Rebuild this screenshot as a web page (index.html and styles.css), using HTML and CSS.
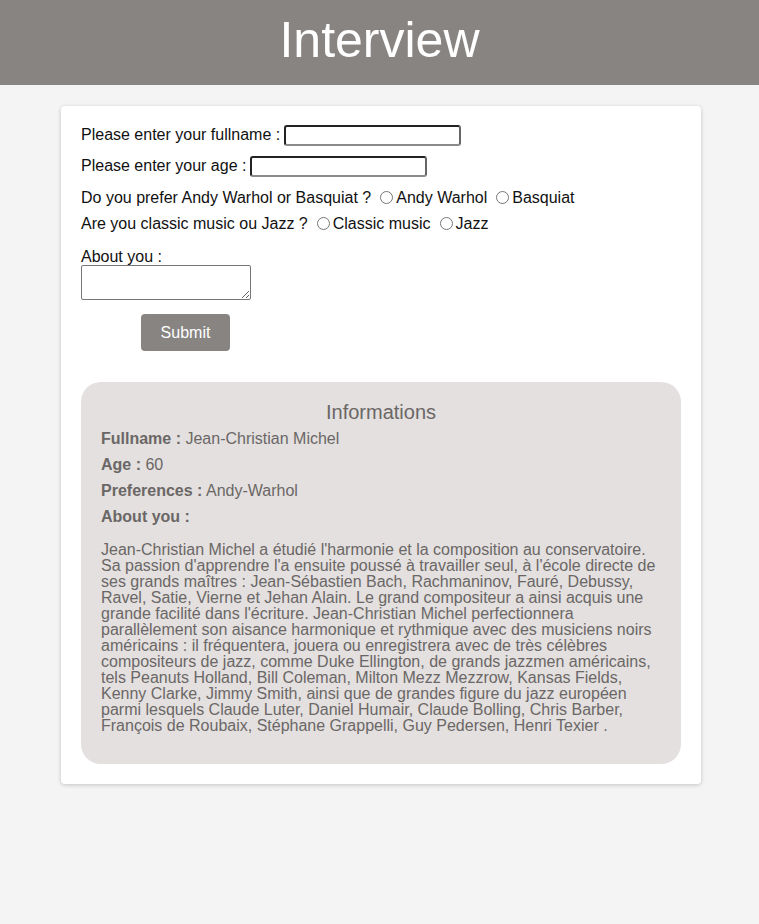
FILE: index.html
```html
<!DOCTYPE html>
<html lang="fr">
<head>
<meta charset="utf-8">
<title>Interview</title>
<link rel="stylesheet" href="styles.css">
</head>
<body>
<header class="top">
  <h1 class="title">Interview</h1>
</header>
<main class="card">
  <form class="form">
    <div class="row row-input">
      <label for="fullname">Please enter your fullname :</label>
      <input class="field" id="fullname" type="text">
    </div>
    <div class="row row-input">
      <label for="age">Please enter your age :</label>
      <input class="field" id="age" type="text">
    </div>
    <div class="row row-radio">
      <span>Do you prefer Andy Warhol or Basquiat ?</span>
      <input class="radio" type="radio" name="pref" id="r1"><label for="r1">Andy Warhol</label>
      <input class="radio" type="radio" name="pref" id="r2"><label for="r2">Basquiat</label>
    </div>
    <div class="row row-radio row-radio2">
      <span>Are you classic music ou Jazz ?</span>
      <input class="radio" type="radio" name="music" id="m1"><label for="m1">Classic music</label>
      <input class="radio" type="radio" name="music" id="m2"><label for="m2">Jazz</label>
    </div>
    <div class="about">
      <label for="about" class="about-label">About you :</label>
      <textarea id="about" class="area"></textarea>
    </div>
    <button type="button" class="submit">Submit</button>
  </form>
  <section class="info">
    <h2 class="info-title">Informations</h2>
    <div class="info-row"><b>Fullname :</b> Jean-Christian Michel</div>
    <div class="info-row"><b>Age :</b> 60</div>
    <div class="info-row"><b>Preferences :</b> Andy-Warhol</div>
    <div class="info-row"><b>About you :</b></div>
    <p class="bio">Jean-Christian Michel a étudié l'harmonie et la composition au conservatoire. Sa passion d'apprendre l'a ensuite poussé à travailler seul, à l'école directe de ses grands maîtres : Jean-Sébastien Bach, Rachmaninov, Fauré, Debussy, Ravel, Satie, Vierne et Jehan Alain. Le grand compositeur a ainsi acquis une grande facilité dans l'écriture. Jean-Christian Michel perfectionnera parallèlement son aisance harmonique et rythmique avec des musiciens noirs américains : il fréquentera, jouera ou enregistrera avec de très célèbres compositeurs de jazz, comme Duke Ellington, de grands jazzmen américains, tels Peanuts Holland, Bill Coleman, Milton Mezz Mezzrow, Kansas Fields, Kenny Clarke, Jimmy Smith, ainsi que de grandes figure du jazz européen parmi lesquels Claude Luter, Daniel Humair, Claude Bolling, Chris Barber, François de Roubaix, Stéphane Grappelli, Guy Pedersen, Henri Texier .</p>
  </section>
</main>
</body>
</html>
```

FILE: styles.css
```css
* { box-sizing: border-box; }
html, body {
  margin: 0;
  padding: 0;
}
body {
  background: #f4f4f4;
  font-family: "Liberation Sans", Arial, sans-serif;
  font-size: 16px;
  color: #111;
  min-height: 924px;
}
.top {
  background: #888482;
  height: 85px;
  display: flex;
  align-items: center;
  justify-content: center;
}
.title {
  margin: 0;
  color: #fff;
  font-weight: normal;
  font-size: 50px;
  line-height: 1;
  position: relative;
  top: -3px;
}
.card {
  width: 640px;
  margin: 21px 0 0 61px;
  background: #fff;
  border-radius: 4px;
  box-shadow: 0 1px 4px rgba(0, 0, 0, 0.2);
  padding: 18px 20px 20px 20px;
}
.form {
  display: flex;
  flex-direction: column;
  align-items: flex-start;
}
.row {
  display: flex;
  align-items: center;
  line-height: 18px;
}
.row-input {
  height: 22px;
  margin-bottom: 9px;
}
.row-input label { margin-right: 4px; }
.field {
  width: 177px;
  height: 21px;
  border: 2px solid;
  border-color: #222 #666 #8a8a8a #222;
  border-radius: 3px;
  background: #fff;
  padding: 1px 2px;
  font: inherit;
}
.row-radio {
  height: 22px;
  margin-top: 1px;
}
.row-radio2 {
  margin-top: 4px;
}
.radio {
  width: 13px;
  height: 13px;
  margin: 0 3px 0 9px;
  position: relative;
  top: -1px;
}
.about {
  display: flex;
  flex-direction: column;
  margin-top: 13px;
}
.about-label {
  line-height: 17px;
}
.area {
  width: 170px;
  height: 35px;
  border: 1px solid #767676;
  border-radius: 2px;
  resize: vertical;
  font: inherit;
  margin: 0;
}
.submit {
  margin: 14px 0 0 60px;
  width: 89px;
  height: 37px;
  background: #888482;
  color: #fff;
  border: none;
  border-radius: 4px;
  font-family: inherit;
  font-size: 16px;
}
.info {
  margin-top: 31px;
  background: #e3e0df;
  border-radius: 20px;
  padding: 18px 20px 30px 20px;
  color: #6b6766;
}
.info-title {
  margin: 0 0 6px 0;
  text-align: center;
  font-size: 20px;
  font-weight: normal;
  line-height: 24px;
}
.info-row {
  line-height: 18px;
  margin-bottom: 8px;
}
.info-row b { font-weight: bold; }
.bio {
  margin: 16px 0 0 0;
  line-height: 16px;
}
```
